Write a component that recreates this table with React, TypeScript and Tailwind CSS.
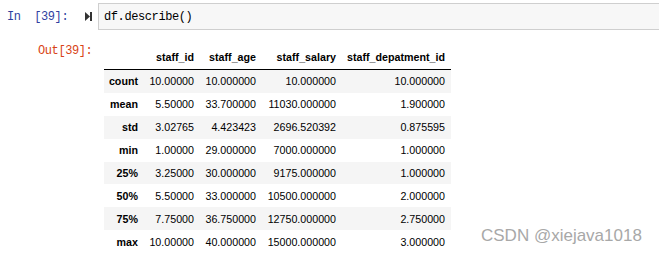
import React from "react";

const cols = ["staff_id", "staff_age", "staff_salary", "staff_depatment_id"];
const rows: [string, string, string, string, string][] = [
  ["count", "10.00000", "10.000000", "10.000000", "10.000000"],
  ["mean", "5.50000", "33.700000", "11030.000000", "1.900000"],
  ["std", "3.02765", "4.423423", "2696.520392", "0.875595"],
  ["min", "1.00000", "29.000000", "7000.000000", "1.000000"],
  ["25%", "3.25000", "30.000000", "9175.000000", "1.000000"],
  ["50%", "5.50000", "33.000000", "10500.000000", "2.000000"],
  ["75%", "7.75000", "36.750000", "12750.000000", "2.750000"],
  ["max", "10.00000", "40.000000", "15000.000000", "3.000000"],
];

const grid = "grid grid-cols-[40px_56px_62px_80px_109px]";

export default function App() {
  return (
    <div className="relative w-[659px] h-[254px] bg-white overflow-hidden">
      <div className="flex pt-[3px]">
        <div className="w-[98px] h-[27px] flex items-center shrink-0">
          <span className="pl-[7px] font-['Liberation_Mono',monospace] text-[12px] tracking-[-0.4px] leading-[14px] text-[#303F9F] whitespace-pre">
            {"In  [39]:"}
          </span>
          <svg className="ml-auto mr-[6px]" width="7" height="9" viewBox="0 0 7 9">
            <path d="M0 0 L5 4.5 L0 9 Z" fill="#333" />
            <rect x="5" y="0" width="2" height="9" fill="#333" />
          </svg>
        </div>
        <div className="h-[27px] w-[640px] shrink-0 border border-[#cfcfcf] bg-[#f7f7f7] flex items-center pl-[5px]">
          <span className="font-['Liberation_Mono',monospace] text-[12px] tracking-[-0.4px] leading-[14px] text-black">
            df.describe()
          </span>
        </div>
      </div>
      <div className="flex">
        <div className="w-[104px] shrink-0 pl-[38px] pt-[6px]">
          <span className="font-['Liberation_Mono',monospace] text-[12px] tracking-[-0.4px] leading-[14px] text-[#D84315] whitespace-pre">
            Out[39]:
          </span>
        </div>
        <div className="mt-[16px] font-['Liberation_Sans',Arial,sans-serif] text-[10.7px] text-black">
          <div className={`${grid} h-[24px] border-b border-black items-center font-bold`}>
            <div />
            {cols.map((c) => (
              <div key={c} className="text-right pr-[6px] whitespace-nowrap">
                {c}
              </div>
            ))}
          </div>
          {rows.map((r, i) => (
            <div
              key={r[0]}
              className={`${grid} h-[22.9px] items-center ${i % 2 === 0 ? "bg-[#f5f5f5]" : "bg-white"}`}
            >
              <div className="text-right pr-[6px] font-bold">{r[0]}</div>
              {r.slice(1).map((v, j) => (
                <div key={j} className="text-right pr-[6px] whitespace-nowrap">
                  {v}
                </div>
              ))}
            </div>
          ))}
        </div>
      </div>
      <div className="absolute left-[481px] top-[226px] font-['Liberation_Sans',Arial,sans-serif] text-[17px] leading-[20px] text-[#a8a8a8] whitespace-nowrap">
        CSDN @xiejava1018
      </div>
    </div>
  );
}
